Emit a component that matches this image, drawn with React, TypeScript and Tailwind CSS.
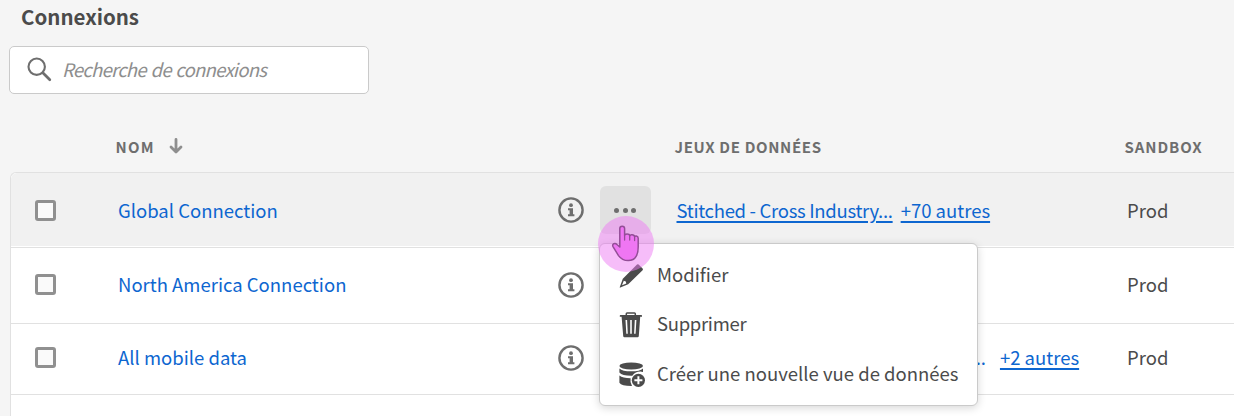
import React from "react";

function InfoIcon() {
  return (
    <svg width="26" height="26" viewBox="0 0 26 26" className="block">
      <circle cx="13" cy="13" r="11.6" fill="none" stroke="#6e6e6e" strokeWidth="2.4" />
      <circle cx="13" cy="8.2" r="1.9" fill="#6e6e6e" />
      <path d="M10 11.2h5v6h1.4v2h-6.4v-2h1.6v-4H10z" fill="#6e6e6e" />
    </svg>
  );
}

function Checkbox() {
  return <span className="block size-[21px] rounded-[3px] border-[3px] border-[#909090] bg-[#fafafa]" />;
}

function HeaderLabel({ children, className }: { children: React.ReactNode; className: string }) {
  return (
    <span className={"whitespace-nowrap text-[15px] font-bold leading-5 text-[#6e6e6e] " + className}>{children}</span>
  );
}

function DatasetLink({ children, className }: { children: React.ReactNode; className: string }) {
  return (
    <a className={"underline decoration-2 underline-offset-[3px] " + className}>{children}</a>
  );
}

type RowProps = {
  name: string;
  textClass: string;
  className: string;
  menu?: boolean;
  children?: React.ReactNode;
};

function Row({ name, textClass, className, menu, children }: RowProps) {
  return (
    <div className={"grid grid-cols-[107.5px_439.5px_119px_450.5px_1fr] items-center border-b border-[#e1e1e1] " + className}>
      <div className="pl-6">
        <Checkbox />
      </div>
      <a className={"whitespace-nowrap text-[#0d66d0] " + textClass}>{name}</a>
      <div className="flex items-center gap-4">
        <InfoIcon />
        {menu && (
          <button className="-my-3 flex h-12 w-[51px] items-center justify-center gap-[3.8px] rounded-md bg-[#e1e1e1] pt-px">
            <span className="size-[5px] rounded-full bg-[#6e6e6e]" />
            <span className="size-[5px] rounded-full bg-[#6e6e6e]" />
            <span className="size-[5px] rounded-full bg-[#6e6e6e]" />
          </button>
        )}
      </div>
      <div className={"flex whitespace-nowrap text-[#0d66d0] " + textClass}>{children}</div>
      <span className={textClass}>Prod</span>
    </div>
  );
}

function PencilIcon() {
  return (
    <svg width="26" height="26" viewBox="0 0 26 26">
      <path
        fill="#4b4b4b"
        fillRule="evenodd"
        d="M19 1.6q.8-.8 1.6 0l4 4q.8.8 0 1.6L10.2 21.2 2.3 24.6q-.8.2-.5-.6L4.8 15.8zM5.8 17.8 4 22.3 8.3 20.4 7.8 18.4z"
      />
    </svg>
  );
}

function TrashIcon() {
  return (
    <svg width="26" height="26" viewBox="0 0 26 26">
      <path d="M8.3 3V1.7q0-.8.8-.8h7.4q.8 0 .8.8V3" fill="none" stroke="#4b4b4b" strokeWidth="1.5" />
      <path
        fill="#4b4b4b"
        fillRule="evenodd"
        d="M2.4 3h21q.6 0 .6.7v1.1H22.2L20.8 24q-.1 1.2-1.2 1.2H6.4q-1.1 0-1.2-1.2L3.6 4.8H1.8V3.7Q1.8 3 2.4 3zM7.5 8l.8 13.7h1.5L9.1 8zM12.2 8v13.7h1.6V8zM16.8 8l-.7 13.7h1.5L18.4 8z"
      />
    </svg>
  );
}

function DataAddIcon() {
  return (
    <svg width="28" height="26" viewBox="0 0 28 26" className="mt-[2px]">
      <ellipse cx="13.2" cy="4" rx="11.8" ry="3.4" fill="#4b4b4b" />
      <path fill="#4b4b4b" d="M1.4 6.4q3 2.9 11.8 2.9t11.8-2.9v3.5q-6.7-1.4-10.7 3.9-10.1.2-12.9-3.2z" />
      <path fill="#4b4b4b" d="M1.4 13.5q3.2 2.6 11.2 2.7-.8 4.1 1.4 7.7Q3.6 24 1.4 20.7z" />
      <circle cx="20.4" cy="18.3" r="6.6" fill="#4b4b4b" />
      <path d="M20.4 14.3v8M16.4 18.3h8" stroke="#fff" strokeWidth="2" />
    </svg>
  );
}

export default function App() {
  return (
    <main className="relative flex h-[416px] w-[1234px] flex-col overflow-hidden bg-[#f5f5f5] font-['Noto_Sans_CJK_SC','Noto_Sans',sans-serif] text-[18.5px] leading-[28px] text-[#4b4b4b]">
      <h1 className="h-[46px] shrink-0 pl-[21px] pt-[2px] text-[20.5px] font-bold">Connexions</h1>
      <div className="ml-[9px] flex h-12 w-[360px] shrink-0 items-center rounded-[5px] border border-[#cacaca] bg-white pl-[17px]">
        <svg width="26" height="26" viewBox="0 0 26 26" fill="none" stroke="#6e6e6e">
          <circle cx="9.7" cy="9.7" r="8.2" strokeWidth="2.1" />
          <path d="m15.8 15.8 7 7" strokeWidth="2.7" strokeLinecap="round" />
        </svg>
        <span className="-mt-[2px] ml-[9px] whitespace-nowrap italic tracking-[-0.75px] text-[#8e8e8e] [word-spacing:1.2px]">Recherche de connexions</span>
      </div>

      <div className="ml-[115.5px] mt-[43px] grid h-[35px] shrink-0 grid-cols-[559px_450px_1fr]">
        <div className="flex gap-[14px]">
          <HeaderLabel className="tracking-[1.2px]">NOM</HeaderLabel>
          <svg width="14" height="16" viewBox="0 0 14 16" className="mt-[1px]" fill="none" stroke="#8e8e8e" strokeLinecap="round" strokeLinejoin="round">
            <path d="M7 1.5v12M2 9l5 5 5-5" strokeWidth="2.8" />
          </svg>
        </div>
        <HeaderLabel className="tracking-[0.65px]">JEUX DE DONNÉES</HeaderLabel>
        <HeaderLabel className="tracking-[0.9px]">SANDBOX</HeaderLabel>
      </div>

      <section className="ml-[9.5px] h-[260px] shrink-0 rounded-tl-md border-l border-t border-[#e1e1e1] bg-white">
        <Row name="Global Connection" textClass="" className="h-[75px] rounded-tl-md bg-[#f1f1f1] shadow-[inset_0_-1px_0_#fff]" menu>
          <DatasetLink className="tracking-[-0.3px]">Stitched - Cross Industry...</DatasetLink>
          <DatasetLink className="ml-2">+70 autres</DatasetLink>
        </Row>
        <Row name="North America Connection" textClass="-mt-[2px]" className="h-[76px] pb-[2px]" />
        <Row name="All mobile data" textClass="-mt-[2px]" className="h-[71px] pb-[3px]">
          <span className="ml-[294px]">...</span>
          <DatasetLink className="ml-[14px]">+2 autres</DatasetLink>
        </Row>
      </section>

      <div className="absolute left-[599px] top-[243px] flex h-[163px] w-[379px] flex-col rounded-md border border-[#cacaca] bg-white pl-[18px] pt-[7px] shadow-[0_2px_8px_rgba(0,0,0,0.16)]">
        <div className="flex h-[49px] items-center gap-[13px]">
          <PencilIcon />
          <span className="-mt-[3px] whitespace-nowrap">Modifier</span>
        </div>
        <div className="flex h-[49px] items-center gap-[13px]">
          <TrashIcon />
          <span className="-mt-[3px] whitespace-nowrap tracking-[-0.3px]">Supprimer</span>
        </div>
        <div className="flex h-[49px] items-center gap-[11px]">
          <DataAddIcon />
          <span className="-mt-[2px] whitespace-nowrap">Créer une nouvelle vue de données</span>
        </div>
      </div>

      <svg width="56" height="56" viewBox="0 0 56 56" className="absolute left-[598px] top-[216px]">
        <circle cx="28" cy="28" r="28" fill="#ee7cf3" fillOpacity=".5" />
        <path
          d="M21.8 31V12.6q0-2.4 2.4-2.4t2.4 2.4v6.6q0-1.2 2.4-1.2 2.5 0 2.7 1.7 .3-1.2 2.4-1 2.4.2 2.5 2 .3-.8 1.8-.6 1.8.3 1.8 2.2v8.5q0 6.5-2.1 9.6-2.3 4.2-7.9 4.2-6.1 0-9.7-5l-5.5-9q-.9-2 .8-2.9 1.8-.6 3.4 1z"
          fill="#ef76f3"
          stroke="#934d97"
          strokeWidth="1.5"
          strokeLinejoin="round"
        />
        <path d="M26.6 19v5M31.7 19.5v4.5M36.6 20.5v4" stroke="#934d97" strokeWidth="1.3" strokeLinecap="round" />
      </svg>
    </main>
  );
}
